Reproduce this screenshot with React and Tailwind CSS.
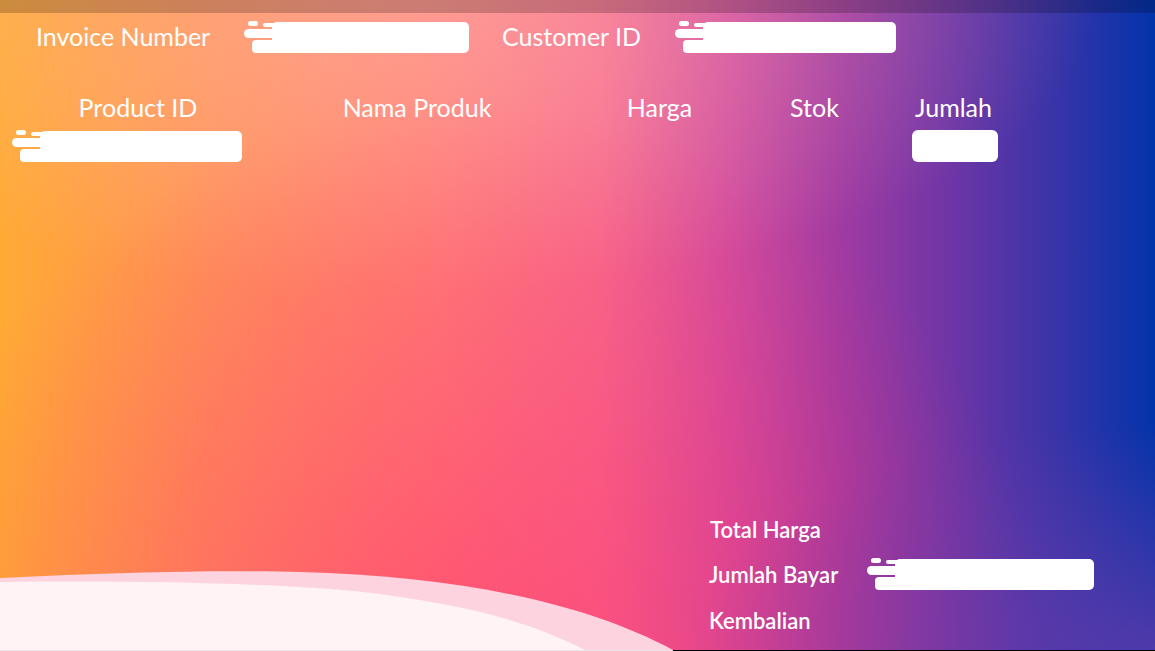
import React from 'react';

function StreakInput({ width }) {
  const w = width;
  return (
    <svg width={w} height="33" viewBox={`0 0 ${w} 33`} className="block shrink-0">
      <rect x="4" y="0" width="10" height="5" rx="2.5" fill="#fff" />
      <rect x="19" y="2" width="17" height="4" rx="2" fill="#fff" />
      <rect x="0" y="8" width="36" height="9" rx="4.5" fill="#fff" />
      <rect x="8" y="19" width="40" height="13" rx="4" fill="#fff" />
      <rect x="28" y="1" width={w - 28} height="31" rx="5" fill="#fff" />
    </svg>
  );
}

function Wave() {
  return (
    <svg width="700" height="80" viewBox="0 0 700 80" className="absolute left-0 bottom-[1px]" preserveAspectRatio="none">
      <path d="M0 8 C 120 2, 220 0, 300 2 C 450 6, 580 30, 673 80 L0 80 Z" fill="#fcd3de" />
      <path d="M0 12 C 150 10, 300 14, 380 24 C 470 36, 530 52, 585 80 L0 80 Z" fill="#fff3f5" />
    </svg>
  );
}

export default function App() {
  const font = { fontFamily: 'Lato, "Noto Sans", sans-serif' };
  return (
    <div
      className="relative w-full h-[651px] overflow-hidden flex flex-col text-white bg-[radial-gradient(ellipse_40%_35%_at_100%_100%,rgba(110,60,170,0.7),rgba(110,60,170,0)_100%),radial-gradient(ellipse_at_40%_105%,rgba(255,50,110,0.6),rgba(255,50,110,0)_60%),radial-gradient(ellipse_60%_45%_at_35%_0%,rgba(255,200,190,0.4),rgba(255,200,190,0)_100%),linear-gradient(to_right,#ffaa35_0%,#ff9258_18%,#ff7e76_38%,#f76a8c_52%,#d24c9e_63%,#a03aa2_73%,#6a35a6_83%,#3434a8_92%,#0333aa_100%)]"
      style={font}
    >
      <Wave />
      <div className="h-[13px] bg-black/20 shrink-0" />

      <div className="relative flex items-center h-[33px] mt-[8px] text-[25px] leading-none">
        <span className="ml-[36px] w-[208px] -mt-[3px]">Invoice Number</span>
        <StreakInput width={225} />
        <span className="ml-[33px] w-[173px] -mt-[3px]">Customer ID</span>
        <StreakInput width={221} />
      </div>

      <div className="relative flex items-center h-[30px] mt-[38px] text-[25px] leading-none">
        <span className="ml-[38px] w-[200px] text-center">Product ID</span>
        <span className="w-[358px] text-center">Nama Produk</span>
        <span className="w-[127px] text-center">Harga</span>
        <span className="w-[183px] text-center">Stok</span>
        <span className="w-[95px] text-center">Jumlah</span>
      </div>

      <div className="relative flex items-start mt-[8px]">
        <div className="ml-[12px]"><StreakInput width={230} /></div>
        <div className="ml-[670px] w-[86px] h-[32px] rounded-[6px] bg-white" />
      </div>

      <div className="relative flex flex-col mt-auto mb-[13px] ml-[709px] text-[22px] leading-none font-semibold">
        <div className="h-[33px] flex items-center ml-[1px]">Total Harga</div>
        <div className="h-[33px] mt-[12px] flex items-center">
          <span className="w-[158px]">Jumlah Bayar</span>
          <StreakInput width={227} />
        </div>
        <div className="h-[33px] mt-[13px] flex items-center">Kembalian</div>
      </div>

      <div className="relative flex h-[1px] shrink-0">
        <div className="w-[673px] bg-[#e6e6e6]" />
        <div className="flex-1 bg-black" />
      </div>
    </div>
  );
}
